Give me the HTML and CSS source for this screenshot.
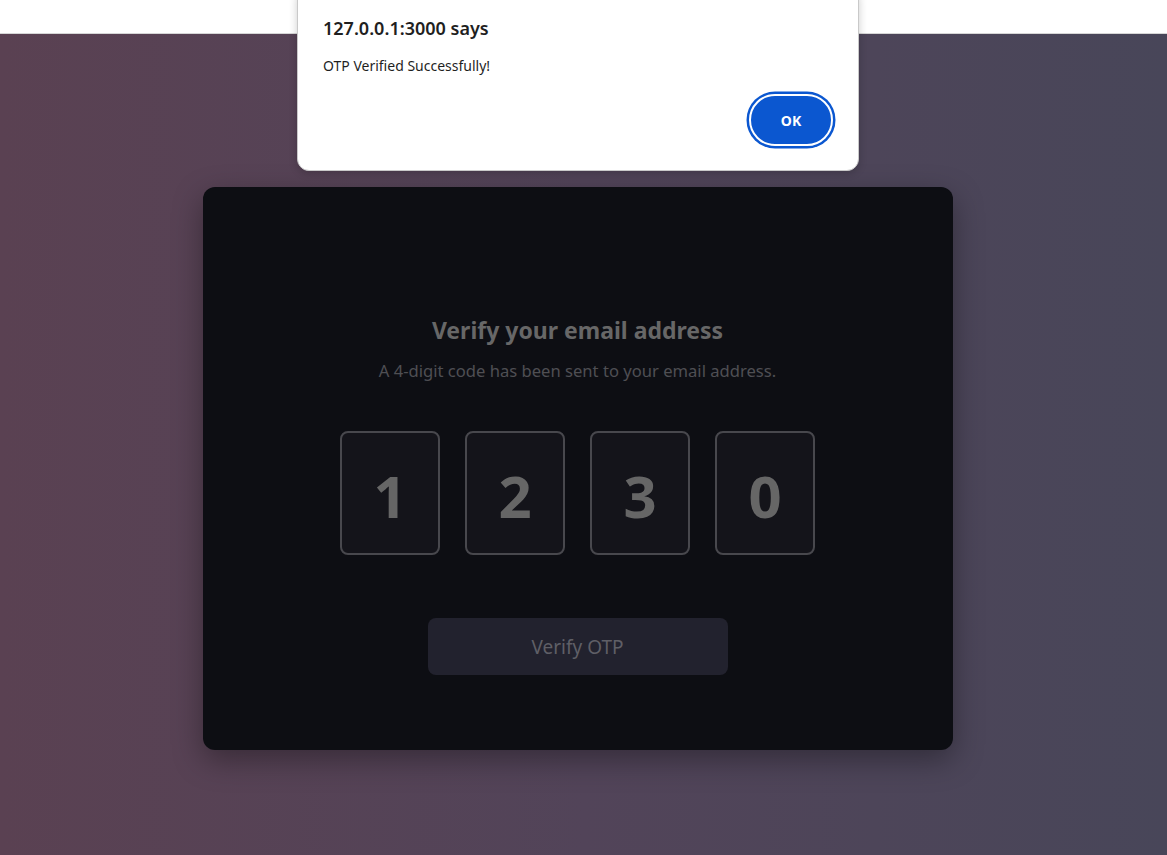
FILE: index.html
```html
<!DOCTYPE html>
<html lang="en">
<head>
<meta charset="utf-8">
<title>Verify OTP</title>
<link rel="stylesheet" href="styles.css">
</head>
<body>
  <div class="topbar"></div>
  <main class="stage">
    <section class="card">
      <h1 class="title">Verify your email address</h1>
      <p class="subtitle">A 4-digit code has been sent to your email address.</p>
      <div class="otp">
        <div class="digit">1</div>
        <div class="digit">2</div>
        <div class="digit">3</div>
        <div class="digit">0</div>
      </div>
      <button class="verify">Verify OTP</button>
    </section>
  </main>
  <div class="dialog">
    <div class="dialog-title">127.0.0.1:3000 says</div>
    <div class="dialog-msg">OTP Verified Successfully!</div>
    <div class="dialog-actions">
      <button class="ok">OK</button>
    </div>
  </div>
</body>
</html>
```

FILE: styles.css
```css
* { box-sizing: border-box; }
html, body { margin: 0; padding: 0; height: 100%; }
body {
  width: 1167px;
  height: 855px;
  overflow: hidden;
  font-family: "Noto Sans", "Open Sans", "Liberation Sans", sans-serif;
  background: #fff;
  display: flex;
  flex-direction: column;
}
.topbar {
  height: 34px;
  flex: none;
  background: #fff;
  border-bottom: 1px solid #d6d6d6;
}
.stage {
  flex: 1;
  background: linear-gradient(90deg, #5a4152 0%, #524459 50%, #484659 100%);
  display: flex;
  justify-content: center;
  align-items: flex-start;
  padding: 153px 12px 0 0;
}
.card {
  width: 750px;
  height: 563px;
  background: #0d0e13;
  border-radius: 12px;
  box-shadow: 0 10px 30px rgba(0,0,0,0.35);
  display: flex;
  flex-direction: column;
  align-items: center;
  padding-top: 127px;
}
.title {
  margin: 0;
  font-size: 23px;
  font-weight: 700;
  color: #676767;
  line-height: 32px;
}
.subtitle {
  margin: 14px 0 0;
  font-size: 16.6px;
  color: #4f4f53;
  line-height: 22px;
}
.otp {
  display: flex;
  gap: 25px;
  margin-top: 49px;
}
.digit {
  width: 100px;
  height: 124px;
  border: 2px solid #48484d;
  border-radius: 8px;
  background: #14141a;
  color: #666;
  font-size: 58px;
  font-weight: 700;
  display: flex;
  align-items: center;
  justify-content: center;
  padding-top: 4px;
}
.verify {
  margin-top: 63px;
  width: 300px;
  height: 57px;
  border: 0;
  border-radius: 8px;
  background: #22222e;
  color: #5f5f66;
  font-family: inherit;
  font-size: 19px;
}
.dialog {
  position: absolute;
  left: 297px;
  top: -12px;
  width: 562px;
  height: 183px;
  background: #fff;
  border: 1px solid #c9c9c9;
  border-radius: 12px;
  box-shadow: 0 2px 8px rgba(0,0,0,0.2);
  padding: 27px 24px 0 25px;
}
.dialog-title {
  font-size: 18px;
  font-weight: 600;
  color: #1f1f1f;
  line-height: 24px;
}
.dialog-msg {
  margin-top: 16px;
  font-size: 14px;
  color: #1f1f1f;
  line-height: 20px;
}
.dialog-actions {
  display: flex;
  justify-content: flex-end;
  margin-top: 18px;
}
.ok {
  width: 84px;
  height: 52px;
  border-radius: 26px;
  background: #0b57d0;
  border: 2px solid #fff;
  box-shadow: 0 0 0 2.5px #0b57d0;
  color: #fff;
  font-family: inherit;
  font-weight: 700;
  font-size: 14px;
  margin-right: 1px;
}
```
